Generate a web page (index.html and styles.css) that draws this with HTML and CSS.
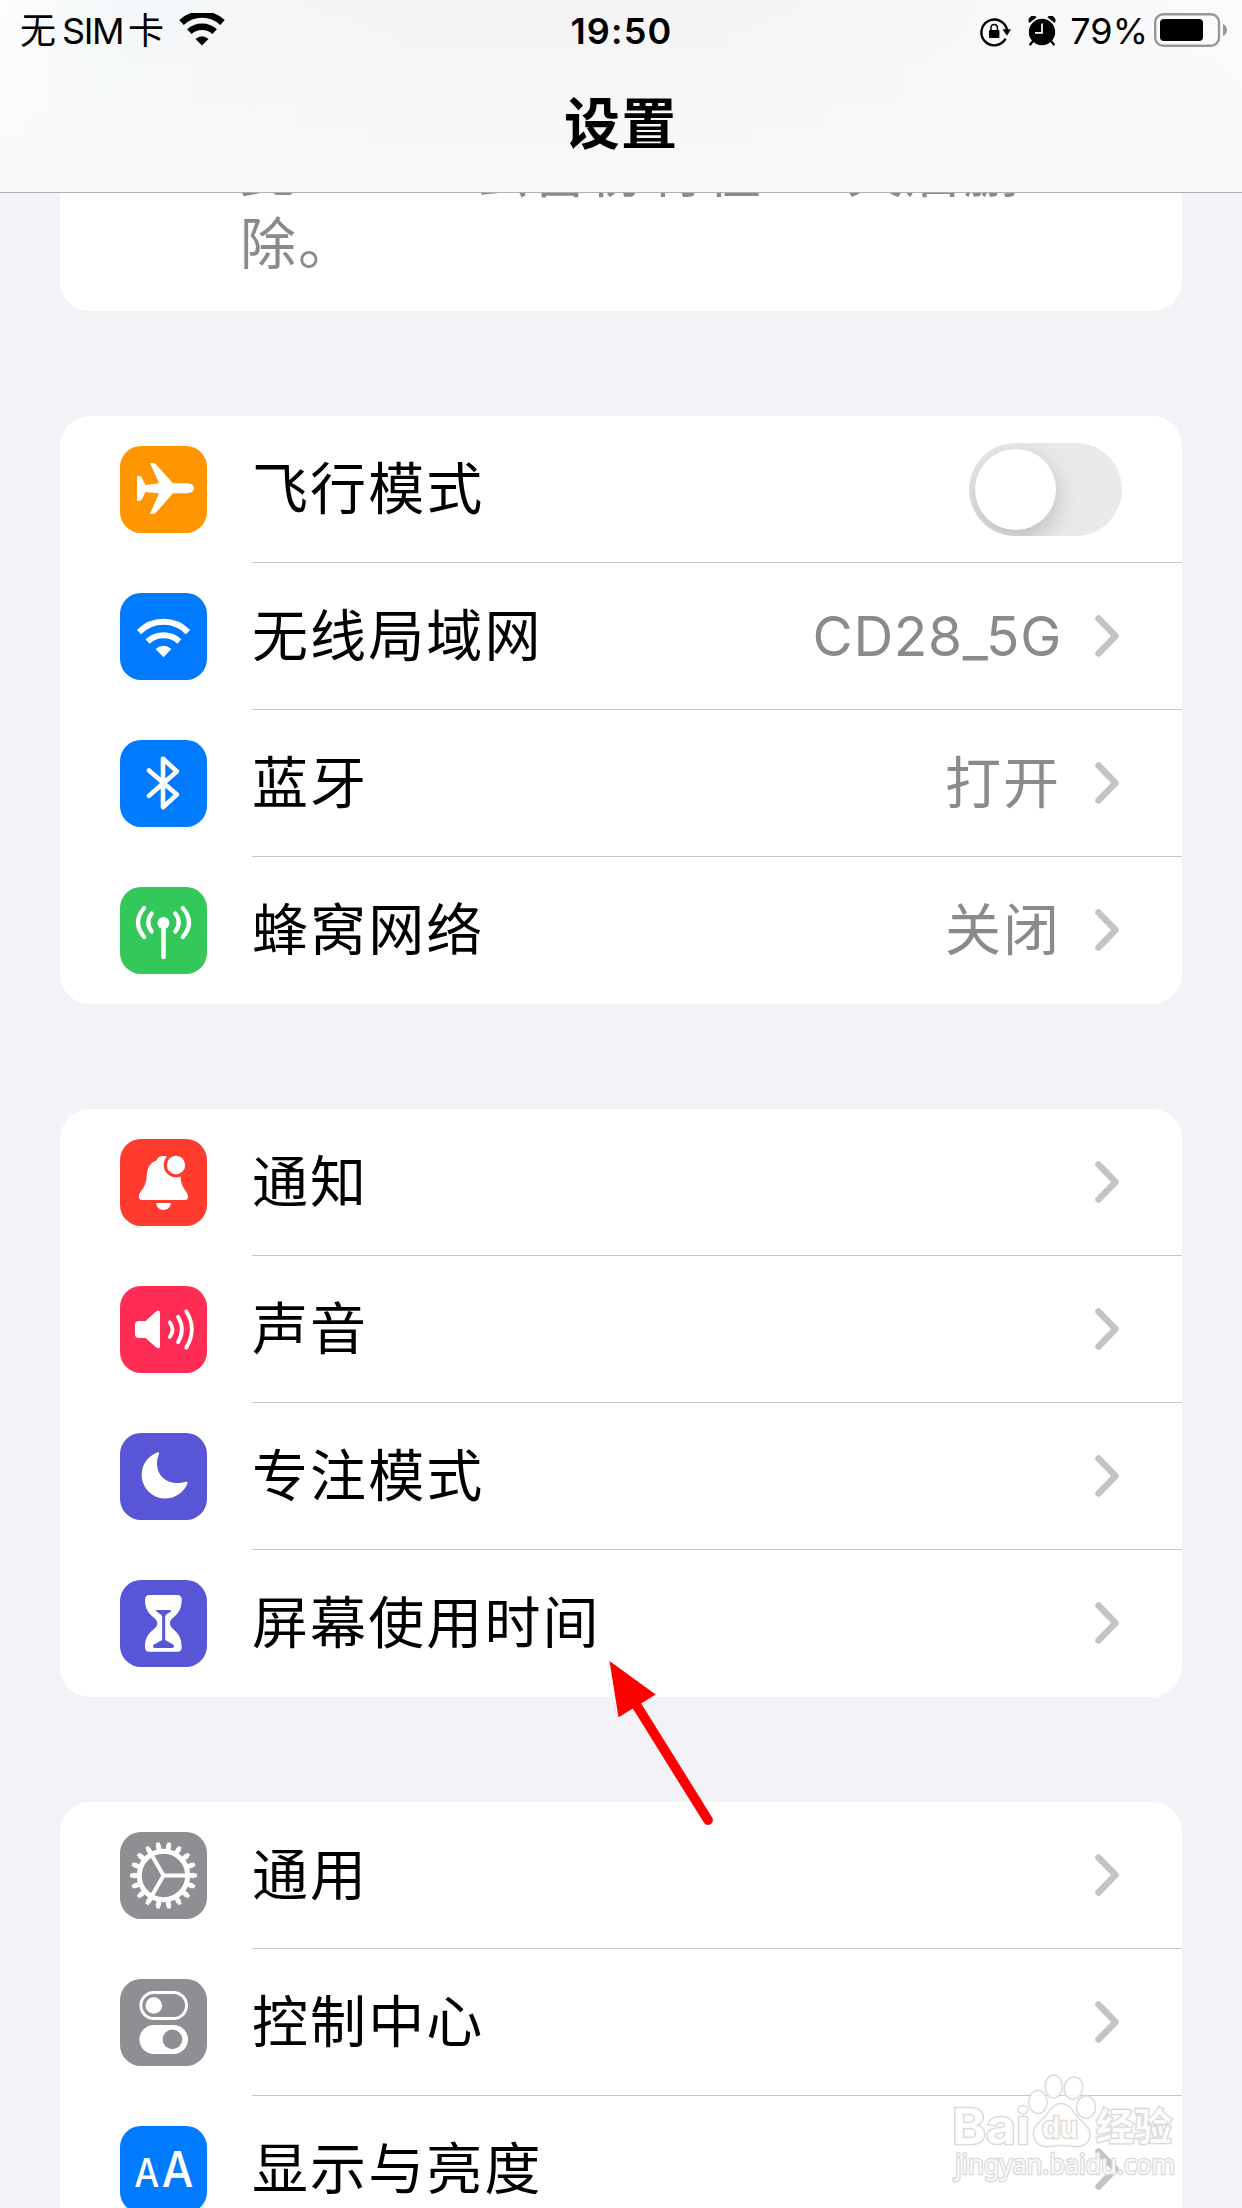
FILE: index.html
```
<!DOCTYPE html>
<html lang="zh-CN">

<head>
    <meta charset="UTF-8">
    <meta name="viewport" content="width=device-width, initial-scale=1.0">
    <title>设置</title>
    <link rel="stylesheet" href="styles.css">
</head>

<body>
    <header class="header">
        <div class="status-bar">
            <div class="status-left">
                <span class="carrier">无<span class="sim">SIM</span>卡</span>
                <svg class="status-wifi" width="46" height="33" viewBox="0 0 46 33">
                    <path d="M2.5 9.5 A30 30 0 0 1 43.5 9.5" fill="none" stroke="#000" stroke-width="6.6" />
                    <path d="M10.3 18.6 A19 19 0 0 1 35.7 18.6" fill="none" stroke="#000" stroke-width="6.6" />
                    <path d="M16.5 26 Q23 20.5 29.5 26 L23 32.6Z" />
                </svg>
            </div>
            <div class="time">19:50</div>
            <div class="status-right">
                <svg class="lock" width="31" height="30" viewBox="0 0 31 30">
                    <path d="M25.6 21.7 A12.9 12.9 0 1 1 27 13" fill="none" stroke="#000" stroke-width="2.4" />
                    <path d="M22.5 12.2 H31 L27 18.8Z" />
                    <rect x="9" y="13" width="10.4" height="8" rx="1" />
                    <path d="M11 13.5 V10.6 A3.2 3.2 0 0 1 17.4 10.6 V13.5" fill="none" stroke="#000" stroke-width="1.5" />
                </svg>
                <svg class="alarm" width="28" height="30" viewBox="0 0 28 30">
                    <circle cx="14" cy="16" r="13.2" />
                    <path d="M1.5 5.8 A4 4 0 0 1 7.5 1.2Z M26.5 5.8 A4 4 0 0 0 20.5 1.2Z" stroke="#000" stroke-width="1.6" stroke-linejoin="round" />
                    <path d="M5 25 L2.2 28.5 M23 25 L25.8 28.5" stroke="#000" stroke-width="2.2" stroke-linecap="round" />
                    <path d="M14 7.5 V16.8 H7" fill="none" stroke="#fff" stroke-width="1.7" />
                </svg>
                <span class="percent">79%</span>
                <svg class="battery" width="74" height="34" viewBox="0 0 74 34">
                    <rect x="1.2" y="1.2" width="63.8" height="31.6" rx="8" fill="none" stroke="#979797" stroke-width="2.4" />
                    <rect x="6" y="6" width="43" height="22" rx="4" />
                    <path d="M69 11 Q73 13 73 17 Q73 21 69 23Z" fill="#979797" />
                </svg>
            </div>
        </div>
        <h1 class="title">设置</h1>
    </header>

    <main class="content">
        <section class="card notice">
            <p>此<span class="word">iCloud</span>云备份将在<span class="days">30</span>天后删除。</p>
        </section>

        <section class="card">
            <div class="row">
                <svg class="icon orange" viewBox="0 0 87 87">
                    <path d="M53 37.3 H67 Q74 38 74 42.3 Q74 46.8 67 47.3 H53 L36.5 66 Q35 68 33 68 H30 L39 47.3 L25.5 46 L22 53 Q21 55 19 55 H17 V30 H19 Q21 30 22 32 L25.5 39 L39 37.3 L30 17 H33 Q35 17 36.5 19Z" />
                </svg>
                <div class="cell">
                    <span class="label">飞行模式</span>
                    <span class="switch"></span>
                </div>
            </div>
            <div class="row">
                <svg class="icon blue" viewBox="0 0 87 87">
                    <path class="line" d="M19 39.2 A34 34 0 0 1 68 39.2" stroke-width="6" />
                    <path class="line" d="M27.6 48.5 A23.6 23.6 0 0 1 59.4 48.5" stroke-width="6" />
                    <path d="M35.6 56 Q43.5 49.6 51.4 56 L43.5 64.3Z" />
                </svg>
                <div class="cell">
                    <span class="label">无线局域网</span>
                    <span class="value wifi-name">CD28_5G</span>
                    <svg class="chevron" viewBox="0 0 24 42"><path d="M3.5 3.5 L20.5 21 L3.5 38.5" /></svg>
                </div>
            </div>
            <div class="row">
                <svg class="icon blue" viewBox="0 0 87 87">
                    <path class="line round" d="M29 30.5 L56.8 54.6 L43 67.3 V18.7 L56.8 31.4 L29 55.8" stroke-width="4.6" />
                </svg>
                <div class="cell">
                    <span class="label">蓝牙</span>
                    <span class="value">打开</span>
                    <svg class="chevron" viewBox="0 0 24 42"><path d="M3.5 3.5 L20.5 21 L3.5 38.5" /></svg>
                </div>
            </div>
            <div class="row">
                <svg class="icon green" viewBox="0 0 87 87">
                    <circle cx="43.5" cy="36" r="6" />
                    <path class="line round" d="M43.5 38 V70" stroke-width="4.6" />
                    <path class="line round" d="M31.7 26.5 Q24.8 35.5 31.7 44.5 M55.3 26.5 Q62.2 35.5 55.3 44.5" stroke-width="4.2" />
                    <path class="line round" d="M24.2 21 Q11.8 35.5 24.2 50 M62.8 21 Q75.2 35.5 62.8 50" stroke-width="4.2" />
                </svg>
                <div class="cell">
                    <span class="label">蜂窝网络</span>
                    <span class="value">关闭</span>
                    <svg class="chevron" viewBox="0 0 24 42"><path d="M3.5 3.5 L20.5 21 L3.5 38.5" /></svg>
                </div>
            </div>
        </section>

        <section class="card">
            <div class="row">
                <svg class="icon red" viewBox="0 0 87 87">
                    <path d="M43.5 17 Q38 17 36.5 21.3 Q27 25 26.6 37 C26.4 50 19 51.5 19 58 Q19 61 22 61 H65 Q68 61 68 58 C68 51.5 60.6 50 60.6 37 L46 17Z" />
                    <circle cx="56" cy="26" r="12.3" fill="#ff3b30" />
                    <circle cx="56" cy="26" r="9.2" />
                    <path d="M36 64 H51 Q50 71 43.5 71 Q37 71 36 64Z" />
                </svg>
                <div class="cell">
                    <span class="label">通知</span>
                    <svg class="chevron" viewBox="0 0 24 42"><path d="M3.5 3.5 L20.5 21 L3.5 38.5" /></svg>
                </div>
            </div>
            <div class="row">
                <svg class="icon pink" viewBox="0 0 87 87">
                    <path d="M19 35 H25.5 L36 25.5 Q40 23 40 27 V60 Q40 64 36 61.3 L25.5 52 H19 Q15 52 15 48 V39 Q15 35 19 35Z" />
                    <path class="line round" d="M49.8 36.3 Q55.2 43.5 49.8 51 M58 30.8 Q65.8 43.5 58 56.2 M66.2 25.3 Q77.5 43.5 66.2 61.7" stroke-width="3.8" />
                </svg>
                <div class="cell">
                    <span class="label">声音</span>
                    <svg class="chevron" viewBox="0 0 24 42"><path d="M3.5 3.5 L20.5 21 L3.5 38.5" /></svg>
                </div>
            </div>
            <div class="row">
                <svg class="icon purple" viewBox="0 0 87 87">
                    <path d="M37.8 19.3 A23.7 23.7 0 1 0 67.5 50.2 Q68 48.2 65.8 48.8 C51 53 37 46 37 30 Q37 25 39 20.8 Q39.4 18.8 37.8 19.3Z" />
                </svg>
                <div class="cell">
                    <span class="label">专注模式</span>
                    <svg class="chevron" viewBox="0 0 24 42"><path d="M3.5 3.5 L20.5 21 L3.5 38.5" /></svg>
                </div>
            </div>
            <div class="row">
                <svg class="icon purple" viewBox="0 0 87 87">
                    <path d="M29.5 15 H57.2 Q61.7 15 61.7 19.5 C61.7 37 50 36 50 43.3 C50 50.6 61.7 50 61.7 67.2 Q61.7 71.8 57.2 71.8 H29.5 Q25 71.8 25 67.2 C25 50 37.3 50.6 37.3 43.3 C37.3 36 25 37 25 19.5 Q25 15 29.5 15Z" />
                    <path d="M37 30 H50.5 Q52 31 50 32.3 Q46 34 45.2 36 V60 L53.5 64.8 Q55 67.8 52 68 H35 Q32 67.8 33.5 64.8 L42.2 60 V36 Q41 34 37 32 Q35 30.6 37 30Z" fill="#5856d6" />
                </svg>
                <div class="cell">
                    <span class="label">屏幕使用时间</span>
                    <svg class="chevron" viewBox="0 0 24 42"><path d="M3.5 3.5 L20.5 21 L3.5 38.5" /></svg>
                </div>
            </div>
        </section>

        <section class="card">
            <div class="row">
                <svg class="icon gray" viewBox="0 0 87 87">
                    <circle class="line" cx="43.5" cy="43.5" r="24.2" stroke-width="5" />
                    <circle class="line" cx="43.5" cy="43.5" r="28.5" pathLength="360" stroke-width="5" stroke-dasharray="10 10" stroke-dashoffset="5" />
                    <circle class="line" cx="43.5" cy="43.5" r="31.7" pathLength="360" stroke-width="3.4" stroke-dasharray="6.6 13.4" stroke-dashoffset="3.3" />
                    <path class="line" d="M43.5 43.5 H67 M43.5 43.5 L31.7 23.1 M43.5 43.5 L31.7 63.9" stroke-width="4" />
                </svg>
                <div class="cell">
                    <span class="label">通用</span>
                    <svg class="chevron" viewBox="0 0 24 42"><path d="M3.5 3.5 L20.5 21 L3.5 38.5" /></svg>
                </div>
            </div>
            <div class="row">
                <svg class="icon gray" viewBox="0 0 87 87">
                    <rect class="line" x="20.9" y="13.5" width="45.6" height="26" rx="13" stroke-width="3" />
                    <circle cx="33.8" cy="26.5" r="8.3" />
                    <rect x="19.4" y="46" width="48.6" height="29" rx="14.5" />
                    <circle cx="52.4" cy="60.4" r="9.8" fill="#8e8e93" />
                </svg>
                <div class="cell">
                    <span class="label">控制中心</span>
                    <svg class="chevron" viewBox="0 0 24 42"><path d="M3.5 3.5 L20.5 21 L3.5 38.5" /></svg>
                </div>
            </div>
            <div class="row">
                <svg class="icon blue" viewBox="0 0 87 87">
                    <text class="letter" x="14.3" y="61.4" font-size="39" textLength="25" lengthAdjust="spacingAndGlyphs">A</text>
                    <text class="letter" x="41.7" y="61.4" font-size="50" textLength="31.6" lengthAdjust="spacingAndGlyphs">A</text>
                </svg>
                <div class="cell">
                    <span class="label">显示与亮度</span>
                    <svg class="chevron" viewBox="0 0 24 42"><path d="M3.5 3.5 L20.5 21 L3.5 38.5" /></svg>
                </div>
            </div>
        </section>
    </main>

    <!-- red pointer to the screen time row -->
    <svg class="pointer" width="130" height="170" viewBox="0 0 130 170">
        <path d="M9.5 1 L55.7 34.5 L18.5 57.3Z" />
        <path d="M37 46 L108 160" stroke="#f00" stroke-width="9.8" stroke-linecap="round" />
    </svg>

    <svg class="watermark" width="232" height="120" viewBox="0 0 232 120">
        <g class="mark">
            <ellipse cx="58" cy="32" rx="8.7" ry="11" />
            <ellipse cx="73.7" cy="16.5" rx="8" ry="11" />
            <ellipse cx="93.5" cy="18" rx="8.7" ry="10.7" transform="rotate(12 93.5 18)" />
            <ellipse cx="106" cy="37" rx="9" ry="10.7" />
            <path d="M81 34 Q88 34 93 42 Q97 48 104 54 Q111 61 109 68 Q106 77 95 76 Q82 74 70 76 Q56 77 54 65 Q53 58 60 52 Q66 47 70 41 Q75 34 81 34Z" />
            <text class="bai" x="-28" y="74" textLength="78" lengthAdjust="spacingAndGlyphs">Bai</text>
            <text class="du" x="62" y="68" textLength="36" lengthAdjust="spacingAndGlyphs">du</text>
            <text class="jingyan" x="116" y="70" textLength="76" lengthAdjust="spacingAndGlyphs">经验</text>
            <text class="url" x="-25" y="104" textLength="220" lengthAdjust="spacingAndGlyphs">jingyan.baidu.com</text>
        </g>
    </svg>
</body>

</html>
```

FILE: styles.css
```
* {
    box-sizing: border-box;
}

body {
    position: relative;
    width: 1242px;
    height: 2208px;
    margin: 0;
    overflow: hidden;
    background-color: #f2f2f7;
    color: #000;
    font-family: Inter, "Noto Sans CJK SC", sans-serif;
}

/* header */
.header {
    position: relative;
    z-index: 1;
    height: 193px;
    border-bottom: 1px solid #b0b0b1;
    background: linear-gradient(to bottom, rgba(249, 249, 249, 0), #f9f9f9), linear-gradient(to right, #fcfdfc 0, #f4f8fa 130px, #f4f4f4 420px, #f4f4f4 700px, #f8f8f8 1000px, #fbfbfb 100%);
}

.status-bar {
    display: grid;
    grid-template-columns: 1fr auto 1fr;
    height: 64px;
    padding: 0 14px 0 20px;
    font-size: 36px;
    line-height: 62px;
}

.status-left,
.status-right {
    display: flex;
}

.status-right {
    justify-content: flex-end;
}

.carrier {
    width: 145px;
    white-space: nowrap;
}

.sim {
    margin: 0 5px 0 6px;
    letter-spacing: -1.4px;
}

.status-wifi {
    margin: 13px 0 0 14px;
}

.time {
    padding-right: 5px;
    font-weight: 600;
    letter-spacing: 1.2px;
}

.lock {
    margin: 17px 17px 0 0;
}

.alarm {
    margin: 16px 14px 0 0;
}

.battery {
    margin: 13px 0 0 6px;
}

.title {
    margin: 32px 0 0;
    font-size: 56px;
    font-weight: 700;
    line-height: 56px;
    text-align: center;
    letter-spacing: 1px;
}

/* list */
.content {
    display: flex;
    flex-direction: column;
    gap: 105px;
    padding: 0 60px;
}

.card {
    flex: none;
    border-radius: 30px;
    background-color: #fff;
}

.notice {
    display: flex;
    align-items: flex-end;
    height: 178px;
    margin-top: -60px;
    padding: 0 60px 31px 180px;
    color: #8a8a8e;
    font-size: 56px;
    line-height: 72px;
    letter-spacing: 2px;
}

.notice p {
    width: 800px;
    margin: 0;
}

.word,
.days {
    display: inline-block;
    width: 176px;
    text-align: center;
    letter-spacing: 0;
}

.days {
    width: 83px;
}

.row {
    display: flex;
    align-items: center;
    height: 147px;
    padding-left: 60px;
}

.icon {
    flex: none;
    width: 87px;
    height: 87px;
    margin-right: 45px;
    border-radius: 21px;
    fill: #fff;
}

.icon .line {
    fill: none;
    stroke: #fff;
}

.icon .round {
    stroke-linecap: round;
    stroke-linejoin: round;
}

.letter {
    font-weight: 500;
}

.orange {
    background-color: #ff9500;
}

.blue {
    background-color: #007aff;
}

.green {
    background-color: #34c759;
}

.red {
    background-color: #ff3b30;
}

.pink {
    background-color: #ff2d55;
}

.purple {
    background-color: #5856d6;
}

.gray {
    background-color: #8e8e93;
}

.cell {
    display: flex;
    flex: 1;
    align-items: center;
    height: 147px;
    padding-right: 60px;
    border-bottom: 1px solid #c6c6c8;
}

.row:last-child .cell {
    border-bottom-color: transparent;
}

.label {
    flex: 1;
    padding-bottom: 9px;
    font-size: 56px;
    letter-spacing: 2.1px;
}

.value {
    margin-right: 34px;
    padding-bottom: 9px;
    color: #8a8a8e;
    font-size: 56px;
    letter-spacing: 2px;
}

.wifi-name {
    padding-bottom: 0;
    margin-right: 33px;
    font-size: 55px;
    letter-spacing: 0.7px;
}

.chevron {
    width: 24px;
    height: 42px;
    margin-right: 3px;
    fill: none;
    stroke: #c4c4c6;
    stroke-width: 6.6;
    stroke-linecap: round;
    stroke-linejoin: round;
}

.switch {
    width: 153px;
    height: 93px;
    padding: 6px;
    overflow: hidden;
    border-radius: 47px;
    background-color: #e9e9eb;
}

.switch::before {
    display: block;
    width: 81px;
    height: 81px;
    border-radius: 50%;
    background-color: #fff;
    box-shadow: 0 9px 24px rgba(0, 0, 0, 0.2);
    content: "";
}

/* overlays */
.pointer {
    position: absolute;
    top: 1660px;
    left: 600px;
    z-index: 2;
    fill: #f00;
}

.watermark {
    position: absolute;
    top: 2070px;
    left: 980px;
    z-index: 2;
    overflow: visible;
}

.mark {
    fill: rgba(255, 255, 255, 0.85);
    stroke: #d9d9d9;
    stroke-width: 2.6;
    paint-order: stroke;
}

.bai,
.du {
    font-size: 49px;
    font-weight: 700;
}

.du {
    font-size: 30px;
}

.jingyan {
    font-size: 38px;
    font-weight: 700;
}

.url {
    font-family: "Noto Sans", sans-serif;
    font-size: 28px;
}
```
